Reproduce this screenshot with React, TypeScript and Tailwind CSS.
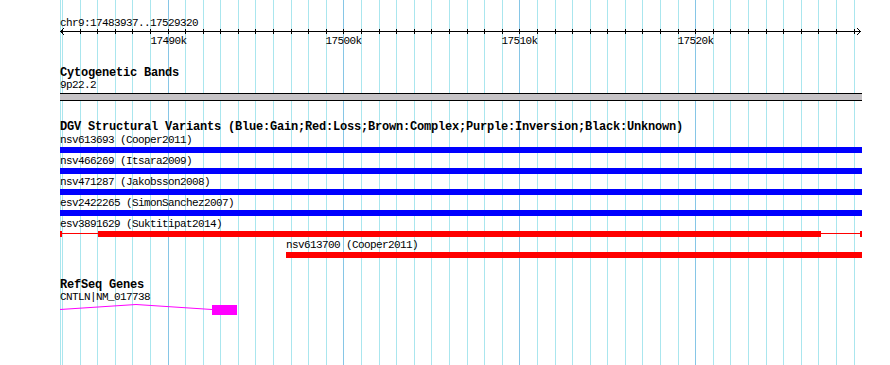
const START_KB = 17484;
const END_KB = 17529;
const PX_PER_KB = 17.59;
const ORIGIN = 62.5;

const kbX = (kb: number) => Math.floor(ORIGIN + (kb - START_KB) * PX_PER_KB) + 0.5;

type Variant = {
  label: string;
  color: string;
  start: number;
  end: number;
  thick?: [number, number];
};

// positions relative to the track's left edge (x=60)
const variants: Variant[] = [
  { label: 'nsv613693 (Cooper2011)', color: '#0000ff', start: 0, end: 802 },
  { label: 'nsv466269 (Itsara2009)', color: '#0000ff', start: 0, end: 802 },
  { label: 'nsv471287 (Jakobsson2008)', color: '#0000ff', start: 0, end: 802 },
  { label: 'esv2422265 (SimonSanchez2007)', color: '#0000ff', start: 0, end: 802 },
  { label: 'esv3891629 (Suktitipat2014)', color: '#ff0000', start: 0, end: 802, thick: [38, 761] },
  { label: 'nsv613700 (Cooper2011)', color: '#ff0000', start: 226, end: 802 },
];

const kbs = Array.from({ length: END_KB - START_KB + 1 }, (_, i) => START_KB + i);

function Grid() {
  return (
    <svg className="absolute inset-0" width={890} height={365}>
      <line x1={60.5} y1={0} x2={60.5} y2={365} stroke="#aae6ee" />
      {kbs.map((kb) => (
        <line
          key={kb}
          x1={kbX(kb)}
          y1={0}
          x2={kbX(kb)}
          y2={365}
          stroke={kb % 10 === 0 ? '#86c6e6' : '#aae6ee'}
        />
      ))}
    </svg>
  );
}

function Ruler() {
  return (
    <svg width={890} height={48} className="block text-[11px] tracking-[-0.6px]">
      <text x={60} y={25.5} fill="#000">chr9:17483937..17529320</text>
      <line x1={60} y1={31.5} x2={861} y2={31.5} stroke="#000" />
      <polyline points="64,28 60.5,31.5 64,35" fill="none" stroke="#000" />
      <polyline points="857,28 860.5,31.5 857,35" fill="none" stroke="#000" />
      {kbs.map((kb) => (
        <line key={kb} x1={kbX(kb)} y1={29} x2={kbX(kb)} y2={34} stroke="#000" />
      ))}
      {kbs
        .filter((kb) => kb % 10 === 0)
        .map((kb) => (
          <text key={kb} x={kbX(kb)} y={44} textAnchor="middle" fill="#000">
            {kb}k
          </text>
        ))}
    </svg>
  );
}

function TrackTitle({ children }: { children: string }) {
  return (
    <div className="h-[13px] leading-[13px] text-[12px] font-bold tracking-[-0.2px] whitespace-nowrap">
      {children}
    </div>
  );
}

function Label({ children, offset = 0 }: { children: string; offset?: number }) {
  return (
    <div
      className="h-[11px] leading-[11px] text-[11px] tracking-[-0.6px] whitespace-nowrap"
      style={{ marginLeft: offset }}
    >
      {children}
    </div>
  );
}

function VariantRow({ v }: { v: Variant }) {
  const width = v.end - v.start;
  return (
    <div className="flex flex-col h-[21px]">
      <Label offset={v.start}>{v.label}</Label>
      {v.thick ? (
        <div className="flex mt-[1px] h-[6px]" style={{ marginLeft: v.start, width }}>
          <div className="w-[2px] h-full" style={{ background: v.color }} />
          <div className="pt-[2px]" style={{ width: v.thick[0] - 2 }}>
            <div className="h-px" style={{ background: v.color }} />
          </div>
          <div className="h-full" style={{ width: v.thick[1] - v.thick[0], background: v.color }} />
          <div className="flex-1 pt-[2px]">
            <div className="h-px" style={{ background: v.color }} />
          </div>
          <div className="w-[2px] h-full" style={{ background: v.color }} />
        </div>
      ) : (
        <div
          className="mt-[1px] h-[6px]"
          style={{ marginLeft: v.start, width, background: v.color }}
        />
      )}
    </div>
  );
}

export default function App() {
  return (
    <div className="relative w-[890px] h-[365px] bg-white overflow-hidden text-black font-['Liberation_Mono',monospace]">
      <Grid />
      <div className="relative flex flex-col">
        <Ruler />

        <div className="ml-[60px] w-[802px] mt-[19px] flex flex-col">
          <TrackTitle>Cytogenetic Bands</TrackTitle>
          <Label>9p22.2</Label>
          <div className="mt-[2px] h-[8px] border-y border-black bg-[#c6c3c6]" />
        </div>

        <div className="ml-[60px] w-[802px] mt-[20px] flex flex-col">
          <TrackTitle>
            DGV Structural Variants (Blue:Gain;Red:Loss;Brown:Complex;Purple:Inversion;Black:Unknown)
          </TrackTitle>
          <div className="mt-[1px] flex flex-col">
            {variants.map((v) => (
              <VariantRow key={v.label} v={v} />
            ))}
          </div>
        </div>

        <div className="ml-[60px] w-[802px] mt-[18px] flex flex-col">
          <TrackTitle>RefSeq Genes</TrackTitle>
          <Label>CNTLN|NM_017738</Label>
          <svg width={180} height={12} className="mt-[1px] block">
            <polyline points="0,5.5 76,0.5 152,5.5" fill="none" stroke="#ff00ff" />
            <rect x={152} y={1} width={25} height={10} fill="#ff00ff" />
          </svg>
        </div>
      </div>
    </div>
  );
}
